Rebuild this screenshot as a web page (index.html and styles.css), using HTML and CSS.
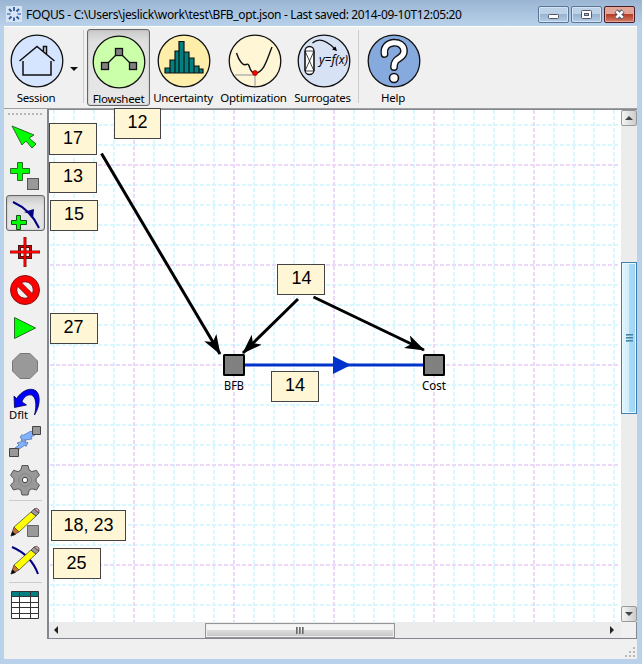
FILE: index.html
```html
<!DOCTYPE html>
<html lang="en">
<head>
<meta charset="utf-8">
<title>FOQUS</title>
<link rel="stylesheet" href="styles.css">
</head>
<body>
<div class="window">
  <header class="titlebar">
    <svg class="logo" viewBox="0 0 16 16"><rect width="16" height="16" fill="#d5e3f3"/><g stroke="#315c98" stroke-width="1.8"><path d="M8 1v4M3 3l2.500 2.500M13 3l-2.500 2.500M3 13l2.500-2.500M8 15v-3.500M13 13l-2.500-2.500" /><path d="M1 8h3.500M11.500 8H15" stroke="#719bce"/></g></svg>
    <h1 class="title">FOQUS - C:\Users\jeslick\work\test\BFB_opt.json - Last saved: 2014-09-10T12:05:20</h1>
    <div class="controls">
      <button class="ctl" aria-label="Minimize"><svg viewBox="0 0 29 15"><rect x="9.500" y="7.500" width="10" height="4" rx="1" fill="#fff" stroke="#535666"/></svg></button>
      <button class="ctl" aria-label="Maximize"><svg viewBox="0 0 29 15"><rect x="9.500" y="3.500" width="10" height="8" rx="1" fill="#fff" stroke="#535666"/><rect x="12.500" y="6.500" width="4" height="2" fill="#a6bfdc" stroke="#535666"/></svg></button>
      <button class="ctl close" aria-label="Close"><svg viewBox="0 0 29 15"><path d="M11 4l7 7M18 4l-7 7" stroke="#535666" stroke-width="4.600"/><path d="M11.300 4.300l6.400 6.400M17.700 4.300l-6.400 6.400" stroke="#fff" stroke-width="2.600"/></svg></button>
    </div>
  </header>
  <nav class="toolbar">
    <button class="tool session"><svg viewBox="0 0 54 54"><circle cx="27" cy="27" r="25.800" fill="#d5e5ff"/><path d="M13 27v14h28V27M9.500 27L27 12.500 44.500 27M33.500 17.500v-5h3v8.500" fill="none" stroke-width="1.500"/></svg><span>Session</span></button>
    <span class="caret"></span>
    <span class="divider"></span>
    <button class="tool flow active"><svg viewBox="0 0 54 54"><circle cx="27" cy="27" r="25.800" fill="#ccffaa"/><path d="M13 31L27 17l14 14" fill="none"/><g fill="#808080"><rect x="9.500" y="27.500" width="7" height="7"/><rect x="23.500" y="13.500" width="7" height="7"/><rect x="37.500" y="27.500" width="7" height="7"/></g></svg><span>Flowsheet</span></button>
    <button class="tool unc"><svg viewBox="0 0 54 54"><circle cx="27" cy="27" r="25.800" fill="#ffeeaa"/><g fill="#008080" stroke-width="1.200"><path d="M8 34h5v5H8zM13 26h5v13h-5zM18 17h4v22h-4zM22 7.500h5V39h-5zM27 18h5v21h-5zM32 24h5v15h-5zM37 32h5v7h-5zM42 35h4v4h-4z"/></g></svg><span>Uncertainty</span></button>
    <button class="tool opt"><svg viewBox="0 0 54 54"><circle cx="27" cy="27" r="25.800" fill="#fff6d5"/><path d="M7 41h20v11" fill="none" stroke="#c8c4b8" stroke-width="2"/><path d="M8.500 19C11 27 15 32 18 30.500C23 28 20 39 27 39C36 39 39 25 44 13" fill="none" stroke-width="1.400"/><circle cx="27" cy="39" r="2.500" fill="#f00" stroke="#900" stroke-width=".7"/></svg><span>Optimization</span></button>
    <button class="tool sur"><svg viewBox="0 0 54 54"><circle cx="27" cy="27" r="25.800" fill="#d7e3f4"/><rect x="8" y="12.500" width="9" height="28" rx="4.500" fill="#fff" stroke-width="1.300"/><path d="M8 17h9v20H8zM8 17l9 20M17 17L8 37" fill="none" stroke-width=".8"/><path d="M15.500 9C21 4 28 5 38 15" fill="none"/><path d="M40 17l-5-1.500 3.500-3z" fill="#000" stroke="none"/><text x="22" y="30" textLength="29" lengthAdjust="spacingAndGlyphs">y=f(x)</text></svg><span>Surrogates</span></button>
    <span class="divider second"></span>
    <button class="tool help"><svg viewBox="0 0 54 54"><circle cx="27" cy="27" r="25.800" fill="#87aade"/><path d="M17.500 20C15 6 37 5 37 17C37 26 27 22 27 33" fill="none" stroke-width="7.800" stroke-linecap="round"/><path d="M17.500 20C15 6 37 5 37 17C37 26 27 22 27 33" fill="none" stroke="#fff" stroke-width="5" stroke-linecap="round"/><circle cx="27" cy="44" r="4.500" fill="#fff" stroke-width="1.600"/></svg><span>Help</span></button>
  </nav>
  <main class="main">
    <aside class="side">
      <div class="grip"></div>
      <button><svg viewBox="4 118 42 38"><path d="M12 126l22 9-5 3 7 6-4 4-6-7-4 4z" fill="#0f0" stroke="#286c28"/></svg></button>
      <button><svg viewBox="4 156 42 38"><path d="M17.500 162.500h5v6h7v5h-7v7h-5v-7h-7v-5h7z" fill="#0f0" stroke="#286c28"/><rect x="27.500" y="178.500" width="11" height="11" fill="#999" stroke="#555"/></svg></button>
      <button class="on"><svg viewBox="4 194 42 38"><path d="M13 202Q31 210 39 228" fill="none" stroke="#000080" stroke-width="2"/><path d="M24 212l10-3-1 10-3-5z" fill="#000080"/><path d="M16.500 215.500h4v5h6v4h-6v5h-4v-5h-5v-4h5z" fill="#0f0" stroke="#174d17"/></svg></button>
      <button><svg viewBox="4 232 42 38"><path d="M19.500 246.500h11v11h-11z" fill="none" stroke="#501010" stroke-width="3"/><path d="M19.500 246.500h11v11h-11z" fill="none" stroke="#d00" stroke-width="1"/><path d="M25 237v30M10 252h30" stroke="#801010" stroke-width="3"/><path d="M25 237.500v29M10.500 252h29" stroke="#f00" stroke-width="1.800"/></svg></button>
      <button><svg viewBox="4 270 42 38"><circle cx="25" cy="290" r="14.500" fill="#f00" stroke="#811"/><circle cx="25" cy="290" r="8.300" fill="#f0f0f0" stroke="#811"/><path d="M19.500 284.500l11 11" stroke="#811" stroke-width="6"/><path d="M18 283l14 14" stroke="#f00" stroke-width="4.800"/></svg></button>
      <button><svg viewBox="4 308 42 38"><path d="M14.500 317.500v21l21-10.500z" fill="#0f0" stroke="#286c28"/></svg></button>
      <button><svg viewBox="4 346 42 38"><path d="M20 353.500h10l7.500 7.500v10l-7.500 7.500H20l-7.500-7.500v-10z" fill="#999" stroke="#777"/></svg></button>
      <button><svg viewBox="4 384 42 38"><path d="M14 396l2.500 2.500C22 391 28 388.500 33 389.500C41 391 41 405 34.500 415C37 405 36 397 31.500 395C27 394 23 398 22 402l4.500 3-12 2.500z" fill="#00f" stroke="#000050" stroke-width=".8"/><text class="dflt" x="9" y="418.500" textLength="19" lengthAdjust="spacingAndGlyphs">Dflt</text></svg></button>
      <button><svg viewBox="4 422 42 38"><path d="M31 431l-8 4.500-1-1-2 3 2 1-1 2 11-1.500-1-2 4-2zM18 450l7-5 1 1.500 2-4-3 .5 1-2.500-9 2.500 2 2-4 3z" fill="#80b3ff" stroke="#5577aa" stroke-width=".8"/><path d="M32.500 426.500h8v8h-8zM9.500 448.500h9v8h-9z" fill="#999" stroke="#444"/></svg></button>
      <button><svg viewBox="4 460 42 38"><path d="M22 465.500h6l1.200 4.600 2.700 1.500 4.600-1.300 3 5-3.400 3.300v3.200l3.400 3.200-3 5-4.600-1.200-2.700 1.500-1.200 4.700h-6l-1.200-4.700-2.700-1.500-4.600 1.200-3-5 3.400-3.200v-3.200l-3.400-3.300 3-5 4.600 1.300 2.700-1.500z" fill="#999" stroke="#555"/><circle cx="25" cy="480" r="6.500" fill="#999" stroke="#888"/><circle cx="25" cy="480" r="2.700" fill="#fff" stroke="#444"/></svg></button>
      <hr class="sep first">
      <button><svg viewBox="4 504 42 38"><path d="M27.500 526.500h11v11h-11z" fill="#999" stroke="#666"/><g class="pencil"><path d="M11 537l3-9 5 5z" fill="#c87137"/><path d="M11 537l1.500-4.500 3 3z" fill="#000"/><path d="M14 528l17-15 5 4-17 16z" fill="#ff0"/><path d="M31 513l3-3 5 4-3 3z" fill="#999"/><path d="M34 510q3-2 5 1v3z" fill="#e7a0a8"/></g></svg></button>
      <button><svg viewBox="4 542 42 38"><path d="M12 548Q31 556 38 575" fill="none" stroke="#000080" stroke-width="2"/><g class="pencil"><path d="M11 575l3-9 5 5z" fill="#c87137"/><path d="M11 575l1.500-4.500 3 3z" fill="#000"/><path d="M14 566l17-15 5 4-17 16z" fill="#ff0"/><path d="M31 551l3-3 5 4-3 3z" fill="#999"/><path d="M34 548q3-2 5 1v3z" fill="#e7a0a8"/></g></svg></button>
      <hr class="sep second">
      <button><svg viewBox="4 587 42 38"><path d="M11.500 592.500h27v27h-27z" fill="#fff"/><path d="M11.500 592.500h27v5h-27z" fill="#008080"/><path d="M11.500 592.500h27v27h-27zM11.500 597.500h27M11.500 603.500h27M11.500 608.500h27M11.500 614.500h27M19.500 592.500v27M30.500 592.500v27" fill="none" stroke="#333"/></svg></button>
    </aside>
    <section class="view">
      <svg class="canvas" viewBox="48 110 572 512">
        <defs><marker id="head" viewBox="0 0 20 14" refX="19" refY="7" markerWidth="20" markerHeight="14" orient="auto" markerUnits="userSpaceOnUse"><path d="M0 0L20 7 0 14 5 7z"/></marker></defs>
        <g class="minor">
          <path d="M54 110v512M74 110v512M94 110v512M114 110v512M154 110v512M174 110v512M194 110v512M214 110v512M254 110v512M274 110v512M294 110v512M314 110v512M354 110v512M374 110v512M394 110v512M414 110v512M454 110v512M474 110v512M494 110v512M514 110v512M554 110v512M574 110v512M594 110v512M614 110v512"/>
          <path d="M50 125h568M50 145h568M50 185h568M50 205h568M50 225h568M50 245h568M50 285h568M50 305h568M50 325h568M50 345h568M50 385h568M50 405h568M50 425h568M50 445h568M50 485h568M50 505h568M50 525h568M50 545h568M50 585h568M50 605h568"/>
        </g>
        <path class="major" d="M134 110v512M234 110v512M334 110v512M434 110v512M534 110v512M50 165h568M50 265h568M50 365h568M50 465h568M50 565h568"/>
        <path d="M244 365h180" stroke="#0033cc" stroke-width="3"/><path d="M333 356v18l18-9z" fill="#0033cc"/>
        <g stroke="#000" stroke-width="3"><path d="M101.500 153.500L220 354" marker-end="url(#head)"/><path d="M298 299L243 353" marker-end="url(#head)"/><path d="M313.500 297L424 350" marker-end="url(#head)"/></g>
        <g fill="#808080" stroke="#000" stroke-width="2"><rect x="224" y="355" width="20" height="20" rx=".5"/><rect x="424" y="355" width="20" height="20" rx=".5"/></g>
        <g class="node"><text x="234" y="389.500" textLength="20" lengthAdjust="spacingAndGlyphs">BFB</text><text x="434" y="389.500" textLength="24" lengthAdjust="spacingAndGlyphs">Cost</text></g>
        <g class="note">
          <rect x="114.500" y="108.500" width="46" height="30"/><text x="137.500" y="128">12</text>
          <rect x="49.500" y="123.500" width="47" height="31"/><text x="73" y="144">17</text>
          <rect x="49.500" y="162.500" width="47" height="30"/><text x="73" y="182">13</text>
          <rect x="50.500" y="200.500" width="47" height="30"/><text x="74" y="220">15</text>
          <rect x="50.500" y="313.500" width="47" height="30"/><text x="73.500" y="333">27</text>
          <rect x="277.500" y="264.500" width="47" height="30"/><text x="301.500" y="284">14</text>
          <rect x="271.500" y="371.500" width="47" height="30"/><text x="295" y="391">14</text>
          <rect x="51.500" y="510.500" width="74" height="30"/><text x="88.500" y="530.500">18, 23</text>
          <rect x="53.500" y="548.500" width="47" height="30"/><text x="76.500" y="568.500">25</text>
        </g>
      </svg>
      <div class="vscroll"><span class="cap"><i class="up"></i></span><span class="vthumb"><i></i><i></i><i></i></span><span class="cap"><i class="down"></i></span></div>
      <div class="hscroll"><i class="left"></i><span class="hthumb"><i></i><i></i><i></i></span><i class="right"></i></div>
      <span class="corner"></span>
    </section>
  </main>
  <footer class="status"><svg viewBox="0 0 12 12"><path d="M8 1h2v2H8zM8 5h2v2H8zM8 9h2v2H8zM4 5h2v2H4zM4 9h2v2H4zM0 9h2v2H0z" fill="#b8b8b8"/></svg></footer>
</div>
</body>
</html>
```
FILE: styles.css
```css
* { box-sizing: border-box; }
body { margin: 0; width: 642px; height: 664px; overflow: hidden; background: #b9d1ea; font-family: "Noto Sans", sans-serif; color: #000; }
button { border: 0; padding: 0; background: none; font: inherit; color: inherit; }
svg { display: block; }
.window { width: 642px; height: 664px; padding: 0 5px 5px 4px; background: linear-gradient(#9ab5d3, #b9d1ea 26px); display: flex; flex-direction: column; }
.titlebar { height: 26px; display: flex; align-items: flex-start; flex: none; }
.logo { width: 16px; height: 16px; margin: 6px 0 0 2px; }
.title { margin: 5px 0 0 4px; font: 12px/19px "Noto Sans", sans-serif; letter-spacing: -.35px; white-space: nowrap; flex: 1; }
.controls { display: flex; gap: 2px; margin: 6px 2px 0 0; }
.ctl { width: 31px; height: 17px; border: 1px solid #5c7594; border-radius: 2px; box-shadow: inset 0 0 0 1px #d5e4f4; background: linear-gradient(#bdd1e7 48%, #98b3d0 50%, #b5cde6); }
.ctl svg { width: 29px; height: 15px; }
.close { border-color: #491e28; box-shadow: inset 0 0 0 1px #e6a698; background: linear-gradient(#e2a699 45%, #b83c27 50%, #d08067); }
.toolbar { height: 83px; flex: none; background: #f0f0f0; border-top: 1px solid #fff; border-bottom: 1px solid #a0a0a0; display: flex; align-items: flex-start; font-size: 11.5px; }
.tool { flex: none; height: 77px; margin-top: 2px; padding-top: 5px; display: flex; flex-direction: column; align-items: center; line-height: 16px; letter-spacing: -.3px; white-space: nowrap; }
.tool svg { width: 54px; height: 54px; margin-left: 2px; stroke: #111; stroke-width: 1.3; flex: none; overflow: visible; }
.tool span { margin-top: 2px; }
.tool svg text { font: italic 12px "Noto Sans", sans-serif; letter-spacing: 0; fill: #000; stroke: none; }
.session { width: 64px; }
.caret { margin: 40px 5px 0 2px; border: 4px solid transparent; border-top-color: #111; border-bottom: 0; }
.divider { width: 1px; height: 73px; margin-top: 3px; background: #ccc; }
.flow { width: 63px; margin-left: 3px; }
.active { border: 1px solid #666; border-radius: 3px; background: linear-gradient(#c9c9c9, #e0e0e0 12px, #e8e8e8); box-shadow: inset 0 0 2px #aaa; }
.flow svg { margin-left: 1px; }
.unc { width: 66px; }
.opt { width: 75px; }
.sur { width: 63px; }
.second.divider { margin-left: 4px; }
.help { width: 68px; }
.main { display: flex; height: 530px; flex: none; }
.side { width: 43px; background: #f0f0f0; display: flex; flex-direction: column; }
.grip { height: 9px; flex: none; padding-top: 4px; }
.grip::before { content: ""; display: block; height: 2px; margin: 0 4px; background: repeating-linear-gradient(90deg, #b8b8b8 0 2px, transparent 2px 4px); }
.side button { width: 42px; height: 38px; flex: none; }
.side button svg { width: 42px; height: 38px; }
.side .on { width: 39px; height: 36px; margin: 1px 0 1px 2px; border: 1px solid #666; border-radius: 3px; background: linear-gradient(#c8c8c8, #e4e4e4 10px); box-shadow: inset 0 0 2px #aaa; }
.side .on svg { margin: -2px 0 0 -3px; }
.dflt { font-size: 11px; }
.pencil { stroke: #333; stroke-width: .7; stroke-linejoin: round; }
.sep { width: 33px; margin: 2px 0 2px 5px; height: 1px; border: 0; background: #ccc; flex: none; }
.second.sep { margin: 3px 0 3px 5px; }
.view { width: 590px; height: 530px; border: 1px solid #828790; border-left-width: 2px; background: #fff; display: grid; grid-template: 512px 16px / 572px 15px; }
.canvas { width: 572px; height: 512px; overflow: visible; margin-left: -1px; position: relative; }
.minor { fill: none; stroke: #d9f7ff; stroke-width: 2; stroke-dasharray: 4 2; }
.major { fill: none; stroke: #ecd8f8; stroke-width: 2; stroke-dasharray: 4 2; }
.node { font-size: 12px; text-anchor: middle; }
.note { font: 18px "Liberation Sans", sans-serif; text-anchor: middle; }
.note rect { fill: #fff6d5; stroke: #444; }
.vscroll { width: 16px; display: flex; flex-direction: column; background: #ececec; position: relative; }
.cap { height: 16px; flex: none; border: 1px solid #999; border-radius: 2px; background: linear-gradient(90deg, #f5f5f5, #ccc); display: flex; align-items: center; justify-content: center; }
.up, .down { border: 4px solid transparent; }
.up { border-bottom-color: #444; border-top: 0; }
.down { border-top-color: #444; border-bottom: 0; }
.vthumb { height: 152px; flex: none; margin: 136px 0 auto; border: 1px solid #3c7fb1; box-shadow: inset 0 0 0 1px #e8f8ff; background: linear-gradient(90deg, #e3f4fc, #d0edfb 50%, #a9dbf5 52%, #9fd5f2); display: flex; flex-direction: column; align-items: center; justify-content: center; gap: 1px; }
.vthumb i { width: 7px; height: 2px; background: linear-gradient(#316b88, #8cc4dc); }
.hscroll { height: 16px; width: 572px; display: flex; align-items: center; background: #ececec; }
.left, .right { border: 4px solid transparent; flex: none; }
.left { border-right-color: #222; border-left: 0; margin-left: 5px; }
.right { border-left-color: #222; border-right: 0; margin-left: 215px; }
.hthumb { width: 190px; height: 15px; margin-left: 147px; border: 1px solid #959595; box-shadow: inset 0 0 0 1px #eee; background: linear-gradient(#f5f5f5 45%, #dcdcdc 50%, #c5c5c5); display: flex; align-items: center; justify-content: center; gap: 1px; }
.hthumb i { width: 2px; height: 7px; background: linear-gradient(90deg, #555, #aaa); }
.corner { background: #f0f0f0; }
.status { height: 20px; background: #f0f0f0; display: flex; justify-content: flex-end; align-items: flex-end; padding: 0 0 1px; }
.status svg { width: 12px; height: 12px; }
```
